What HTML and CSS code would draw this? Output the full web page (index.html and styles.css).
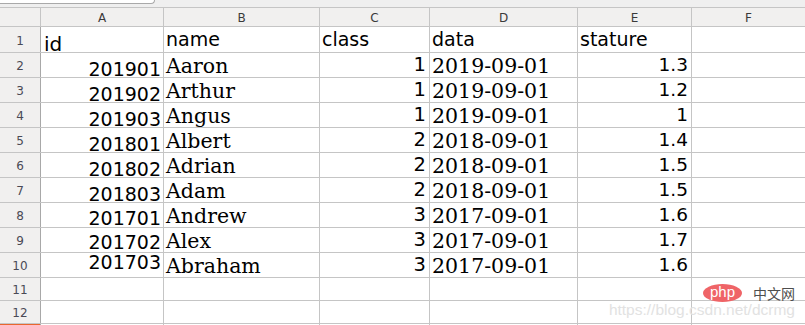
FILE: index.html
```html
<!DOCTYPE html>
<html>
<head>
<meta charset="utf-8">
<link rel="stylesheet" href="styles.css">
</head>
<body>
<div class="topbar"><div class="namebox"></div></div>
<div class="sheet">
  <div class="corner"></div>
  <div class="colhead">A</div>
  <div class="colhead">B</div>
  <div class="colhead">C</div>
  <div class="colhead">D</div>
  <div class="colhead">E</div>
  <div class="colhead">F</div>

  <div class="rowhead">1</div>
  <div class="cell hid">id</div>
  <div class="cell hdr">name</div>
  <div class="cell hdr">class</div>
  <div class="cell hdr">data</div>
  <div class="cell hdr">stature</div>
  <div class="cell"></div>

  <div class="rowhead">2</div>
  <div class="cell num">201901</div>
  <div class="cell txt">Aaron</div>
  <div class="cell cls">1</div>
  <div class="cell txt">2019-09-01</div>
  <div class="cell sta">1.3</div>
  <div class="cell"></div>

  <div class="rowhead">3</div>
  <div class="cell num">201902</div>
  <div class="cell txt">Arthur</div>
  <div class="cell cls">1</div>
  <div class="cell txt">2019-09-01</div>
  <div class="cell sta">1.2</div>
  <div class="cell"></div>

  <div class="rowhead">4</div>
  <div class="cell num">201903</div>
  <div class="cell txt">Angus</div>
  <div class="cell cls">1</div>
  <div class="cell txt">2019-09-01</div>
  <div class="cell sta">1</div>
  <div class="cell"></div>

  <div class="rowhead">5</div>
  <div class="cell num">201801</div>
  <div class="cell txt">Albert</div>
  <div class="cell cls">2</div>
  <div class="cell txt">2018-09-01</div>
  <div class="cell sta">1.4</div>
  <div class="cell"></div>

  <div class="rowhead">6</div>
  <div class="cell num">201802</div>
  <div class="cell txt">Adrian</div>
  <div class="cell cls">2</div>
  <div class="cell txt">2018-09-01</div>
  <div class="cell sta">1.5</div>
  <div class="cell"></div>

  <div class="rowhead">7</div>
  <div class="cell num">201803</div>
  <div class="cell txt">Adam</div>
  <div class="cell cls">2</div>
  <div class="cell txt">2018-09-01</div>
  <div class="cell sta">1.5</div>
  <div class="cell"></div>

  <div class="rowhead">8</div>
  <div class="cell num lift2">201701</div>
  <div class="cell txt">Andrew</div>
  <div class="cell cls">3</div>
  <div class="cell txt">2017-09-01</div>
  <div class="cell sta">1.6</div>
  <div class="cell"></div>

  <div class="rowhead">9</div>
  <div class="cell num lift3">201702</div>
  <div class="cell txt">Alex</div>
  <div class="cell cls">3</div>
  <div class="cell txt">2017-09-01</div>
  <div class="cell sta">1.7</div>
  <div class="cell"></div>

  <div class="rowhead">10</div>
  <div class="cell num lift8">201703</div>
  <div class="cell txt">Abraham</div>
  <div class="cell cls">3</div>
  <div class="cell txt">2017-09-01</div>
  <div class="cell sta">1.6</div>
  <div class="cell"></div>

  <div class="rowhead">11</div>
  <div class="cell"></div><div class="cell"></div><div class="cell"></div><div class="cell"></div><div class="cell"></div><div class="cell"></div>

  <div class="rowhead">12</div>
  <div class="cell"></div><div class="cell"></div><div class="cell"></div><div class="cell"></div><div class="cell"></div><div class="cell"></div>

  <div class="rowhead sel"></div>
  <div class="cell"></div><div class="cell"></div><div class="cell"></div><div class="cell"></div><div class="cell"></div><div class="cell"></div>
</div>
<div class="watermark">
  <div class="wm-brand"><span class="php">php</span><span class="cn">中文网</span></div>
  <div class="wm-url">https://blog.csdn.net/dcrmg</div>
</div>
</body>
</html>
```

FILE: styles.css
```css
html, body {
  margin: 0;
  padding: 0;
  background: #ffffff;
  overflow: hidden;
}
body {
  width: 805px;
  height: 325px;
  position: relative;
  font-family: "DejaVu Sans", sans-serif;
}
.topbar {
  height: 7px;
  background: #efefef;
}
.namebox {
  width: 154px;
  height: 3px;
  background: #ffffff;
  border: 1px solid #a9a9a9;
  border-top: none;
  border-left: none;
  border-bottom-right-radius: 4px;
}
.sheet {
  display: grid;
  grid-template-columns: 40px 122px 155px 109px 147px 113px 1fr;
  grid-template-rows: 18px 25px repeat(9, 24px) 22px 22px 10px;
  gap: 1px;
  padding-top: 1px;
  background: #c5c5c5;
}
.corner, .colhead, .rowhead {
  background: #f1f0ef;
}
.colhead {
  font-size: 12px;
  color: #3a3a3a;
  display: flex;
  align-items: flex-end;
  justify-content: center;
  line-height: 12px;
  padding-bottom: 2px;
}
.rowhead {
  font-size: 12px;
  color: #4a4a55;
  display: flex;
  align-items: center;
  justify-content: center;
  padding-top: 2px;
  border-right: 1px solid #a8a8a8;
  margin-right: -1px;
}
.rowhead.sel {
  background: #e9672e;
}
.cell {
  background: #ffffff;
  display: flex;
  align-items: flex-end;
  color: #000000;
  white-space: nowrap;
  overflow: visible;
  box-sizing: border-box;
}
.hid {
  font-size: 20px;
  line-height: 14px;
  padding-left: 3px;
  padding-bottom: 1px;
}
.hdr {
  font-size: 19px;
  line-height: 13px;
  padding-left: 2px;
  padding-bottom: 6px;
}
.num {
  font-size: 19px;
  line-height: 13px;
  justify-content: flex-end;
  padding-right: 2px;
  padding-bottom: 1px;
}
.num.lift2 { padding-bottom: 2px; }
.num.lift3 { padding-bottom: 3px; }
.num.lift8 { padding-bottom: 8px; }
.txt {
  font-family: "DejaVu Serif", serif;
  font-size: 20.5px;
  line-height: 14px;
  padding-left: 2px;
  padding-bottom: 4px;
}
.cls {
  font-size: 19.5px;
  line-height: 13px;
  justify-content: flex-end;
  padding-right: 3px;
  padding-bottom: 6px;
}
.sta {
  font-size: 18.5px;
  line-height: 13px;
  justify-content: flex-end;
  padding-right: 3px;
  padding-bottom: 6px;
}
.watermark {
  position: absolute;
  left: 606px;
  top: 283px;
  width: 189px;
}
.wm-brand {
  display: flex;
  align-items: center;
  justify-content: flex-end;
  gap: 11px;
  height: 19px;
}
.php {
  display: inline-flex;
  align-items: center;
  justify-content: center;
  width: 39px;
  height: 18px;
  border-radius: 50%;
  background: #ef6467;
  color: #ffffff;
  font-family: "Liberation Sans", sans-serif;
  font-size: 15px;
  line-height: 18px;
  padding-bottom: 1px;
  box-sizing: border-box;
}
.cn {
  font-family: "Noto Sans CJK SC", sans-serif;
  font-size: 14px;
  color: #4e4e4e;
  line-height: 14px;
}
.wm-url {
  font-family: "Liberation Sans", sans-serif;
  font-size: 15.5px;
  line-height: 16px;
  color: #e2e2e2;
  text-align: right;
}
```
